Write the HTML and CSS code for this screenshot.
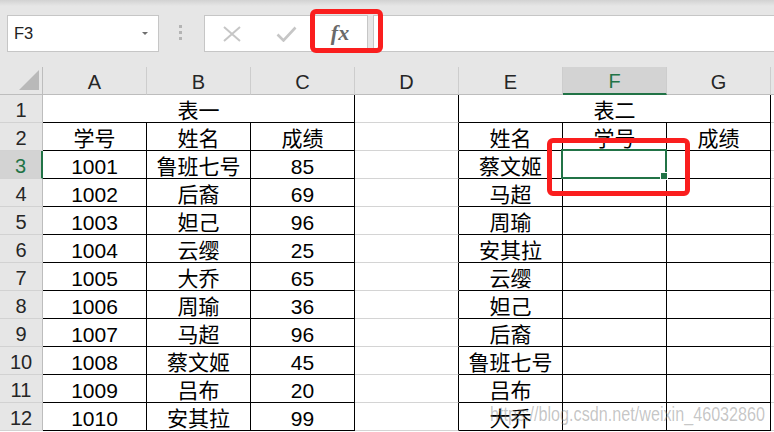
FILE: index.html
```html
<!DOCTYPE html>
<html lang="zh-CN">
  <head>
    <meta charset="UTF-8" />
    <meta name="viewport" content="width=device-width, initial-scale=1.0" />
    <title>表一 表二</title>
    <link rel="stylesheet" href="styles.css">
  </head>
  <body>
    <div class="app">
      <div class="toolbar">
        <div class="name-box"><span>F3</span><i class="caret"></i></div>
        <div class="grip"><i></i><i></i><i></i></div>
        <div class="fx-buttons">
          <span class="fx-btn">
            <svg width="18" height="16" viewBox="0 0 18 16"><path d="M1 1L17 15M17 1L1 15" stroke="#c6c6c6" stroke-width="2" fill="none"/></svg>
          </span>
          <span class="fx-btn">
            <svg width="21" height="16" viewBox="0 0 21 16"><path d="M1.5 8.5L7.5 14.5L19.5 1.5" stroke="#c6c6c6" stroke-width="2.6" fill="none"/></svg>
          </span>
          <span class="fx-btn fx-label">fx</span>
        </div>
        <div class="formula-input"></div>
      </div>

      <table class="sheet">
        <thead>
          <tr>
            <th class="corner"><svg width="20" height="20" viewBox="0 0 20 20"><path d="M20 0V20H0Z" fill="#b9b9b9"/></svg></th>
            <th>A</th>
            <th>B</th>
            <th>C</th>
            <th>D</th>
            <th>E</th>
            <th class="active">F</th>
            <th>G</th>
            <th></th>
          </tr>
        </thead>
        <tbody>
          <tr>
            <th>1</th>
            <td class="t" colspan="3">表一</td>
            <td class="edge"></td>
            <td class="t" colspan="3">表二</td>
            <td></td>
          </tr>
          <tr>
            <th>2</th>
            <td class="t">学号</td><td class="t">姓名</td><td class="t">成绩</td>
            <td class="edge"></td>
            <td class="t">姓名</td><td class="t">学号</td><td class="t">成绩</td>
            <td></td>
          </tr>
          <tr>
            <th class="active">3</th>
            <td class="t">1001</td><td class="t">鲁班七号</td><td class="t">85</td>
            <td class="edge"></td>
            <td class="t">蔡文姬</td><td class="t current"><div class="selection"><i class="handle"></i></div></td><td class="t"></td>
            <td></td>
          </tr>
          <tr>
            <th>4</th>
            <td class="t">1002</td><td class="t">后裔</td><td class="t">69</td>
            <td class="edge"></td>
            <td class="t">马超</td><td class="t"></td><td class="t"></td>
            <td></td>
          </tr>
          <tr>
            <th>5</th>
            <td class="t">1003</td><td class="t">妲己</td><td class="t">96</td>
            <td class="edge"></td>
            <td class="t">周瑜</td><td class="t"></td><td class="t"></td>
            <td></td>
          </tr>
          <tr>
            <th>6</th>
            <td class="t">1004</td><td class="t">云缨</td><td class="t">25</td>
            <td class="edge"></td>
            <td class="t">安其拉</td><td class="t"></td><td class="t"></td>
            <td></td>
          </tr>
          <tr>
            <th>7</th>
            <td class="t">1005</td><td class="t">大乔</td><td class="t">65</td>
            <td class="edge"></td>
            <td class="t">云缨</td><td class="t"></td><td class="t"></td>
            <td></td>
          </tr>
          <tr>
            <th>8</th>
            <td class="t">1006</td><td class="t">周瑜</td><td class="t">36</td>
            <td class="edge"></td>
            <td class="t">妲己</td><td class="t"></td><td class="t"></td>
            <td></td>
          </tr>
          <tr>
            <th>9</th>
            <td class="t">1007</td><td class="t">马超</td><td class="t">96</td>
            <td class="edge"></td>
            <td class="t">后裔</td><td class="t"></td><td class="t"></td>
            <td></td>
          </tr>
          <tr>
            <th>10</th>
            <td class="t">1008</td><td class="t">蔡文姬</td><td class="t">45</td>
            <td class="edge"></td>
            <td class="t">鲁班七号</td><td class="t"></td><td class="t"></td>
            <td></td>
          </tr>
          <tr>
            <th>11</th>
            <td class="t">1009</td><td class="t">吕布</td><td class="t">20</td>
            <td class="edge"></td>
            <td class="t">吕布</td><td class="t"></td><td class="t"></td>
            <td></td>
          </tr>
          <tr>
            <th>12</th>
            <td class="t">1010</td><td class="t">安其拉</td><td class="t">99</td>
            <td class="edge"></td>
            <td class="t">大乔</td><td class="t"></td><td class="t"></td>
            <td></td>
          </tr>
        </tbody>
      </table>

      <div class="mark mark-fx"></div>
      <div class="mark mark-cell"></div>
      <div class="watermark">https://blog.csdn.net/weixin_46032860</div>
    </div>
  </body>
</html>
```

FILE: styles.css
```css
/* page */
body {
  margin: 0;
  background: #fff;
}
.app {
  position: relative;
  width: 774px;
  height: 432px;
  overflow: hidden;
  background: #fff;
  font-family: "Liberation Sans", "Noto Sans CJK SC", sans-serif;
}

/* formula bar */
.toolbar {
  display: flex;
  align-items: flex-start;
  height: 67px;
  box-sizing: border-box;
  padding: 15px 0 0 7px;
  background: linear-gradient(#d2d2d2, #e6e6e6 6px);
}
.name-box {
  display: flex;
  align-items: center;
  justify-content: space-between;
  width: 152px;
  height: 37px;
  box-sizing: border-box;
  padding: 0 10px 0 6px;
  border: 1px solid #c6c6c6;
  background: #fff;
  font-size: 16.5px;
  color: #222;
}
.caret {
  width: 0;
  height: 0;
  border-left: 3px solid transparent;
  border-right: 3px solid transparent;
  border-top: 3px solid #6f6f6f;
}
.grip {
  display: flex;
  flex-direction: column;
  gap: 3px;
  margin: 10px 22px 0 20px;
}
.grip i {
  display: block;
  width: 3px;
  height: 3px;
  background: #b4b4b4;
}
.fx-buttons {
  display: flex;
  width: 164px;
  height: 37px;
  box-sizing: border-box;
  border: 1px solid #c6c6c6;
  background: #fff;
}
.fx-btn {
  display: flex;
  align-items: center;
  justify-content: center;
  width: 54px;
}
.fx-label {
  font-family: "Liberation Serif", serif;
  font-style: italic;
  font-weight: bold;
  font-size: 22px;
  color: #6a6a6a;
  padding-bottom: 2px;
  box-sizing: border-box;
}
.formula-input {
  flex: 1;
  height: 37px;
  margin-left: 5px;
  box-sizing: border-box;
  border: 1px solid #c6c6c6;
  border-right: 0;
  background: #fff;
}

/* grid */
.sheet {
  width: 875px;
  table-layout: fixed;
  border-collapse: separate;
  border-spacing: 0;
}
.sheet tr {
  height: 28px;
}
.sheet th,
.sheet td {
  box-sizing: border-box;
  padding: 0;
  line-height: 23px;
  vertical-align: bottom;
  text-align: center;
  white-space: nowrap;
}
.sheet thead th {
  width: 104px;
  background: #e6e6e6;
  font-size: 20px;
  font-weight: normal;
  color: #262626;
  border-right: 1px solid #cdcdcd;
  border-bottom: 1px solid #bdbdbd;
}
.sheet thead th.corner {
  width: 43px;
  line-height: 0;
  border-right-color: #bdbdbd;
}
.corner svg {
  display: block;
  margin: 0 3px 4px auto;
}
.sheet tbody th {
  background: #e6e6e6;
  font-size: 20px;
  font-weight: normal;
  color: #262626;
  border-right: 1px solid #bdbdbd;
  border-bottom: 1px solid #d2d2d2;
}
.sheet thead th.active {
  background: #d3d3d3;
  color: #217346;
  border-bottom: 2px solid #217346;
}
.sheet tbody th.active {
  background: #d3d3d3;
  color: #217346;
  border-right: 2px solid #217346;
}
.sheet td {
  font-size: 21px;
  color: #000;
  border-right: 1px solid #d4d4d4;
  border-bottom: 1px solid #d4d4d4;
}
.sheet td.t {
  border-right-color: #000;
  border-bottom-color: #000;
}
.sheet td.edge {
  border-right-color: #000;
}

/* active cell */
.current {
  position: relative;
}
.selection {
  position: absolute;
  top: -2px;
  left: -2px;
  right: -1px;
  bottom: -1px;
  border: 2px solid #217346;
}
.handle {
  position: absolute;
  right: -3px;
  bottom: -3px;
  width: 8px;
  height: 8px;
  box-sizing: border-box;
  border: 1px solid #fff;
  background: #217346;
}

/* red annotation boxes */
.mark {
  position: absolute;
  box-sizing: border-box;
  border: 5px solid #fa1e1e;
  border-radius: 6px;
}
.mark-fx {
  left: 310px;
  top: 9px;
  width: 73px;
  height: 44px;
}
.mark-cell {
  left: 547px;
  top: 138px;
  width: 143px;
  height: 58px;
}

.watermark {
  position: absolute;
  left: 490px;
  top: 403px;
  font-size: 21px;
  line-height: 21px;
  color: rgba(128, 128, 128, 0.45);
  white-space: nowrap;
  transform: scaleX(0.77);
  transform-origin: left top;
}
```
